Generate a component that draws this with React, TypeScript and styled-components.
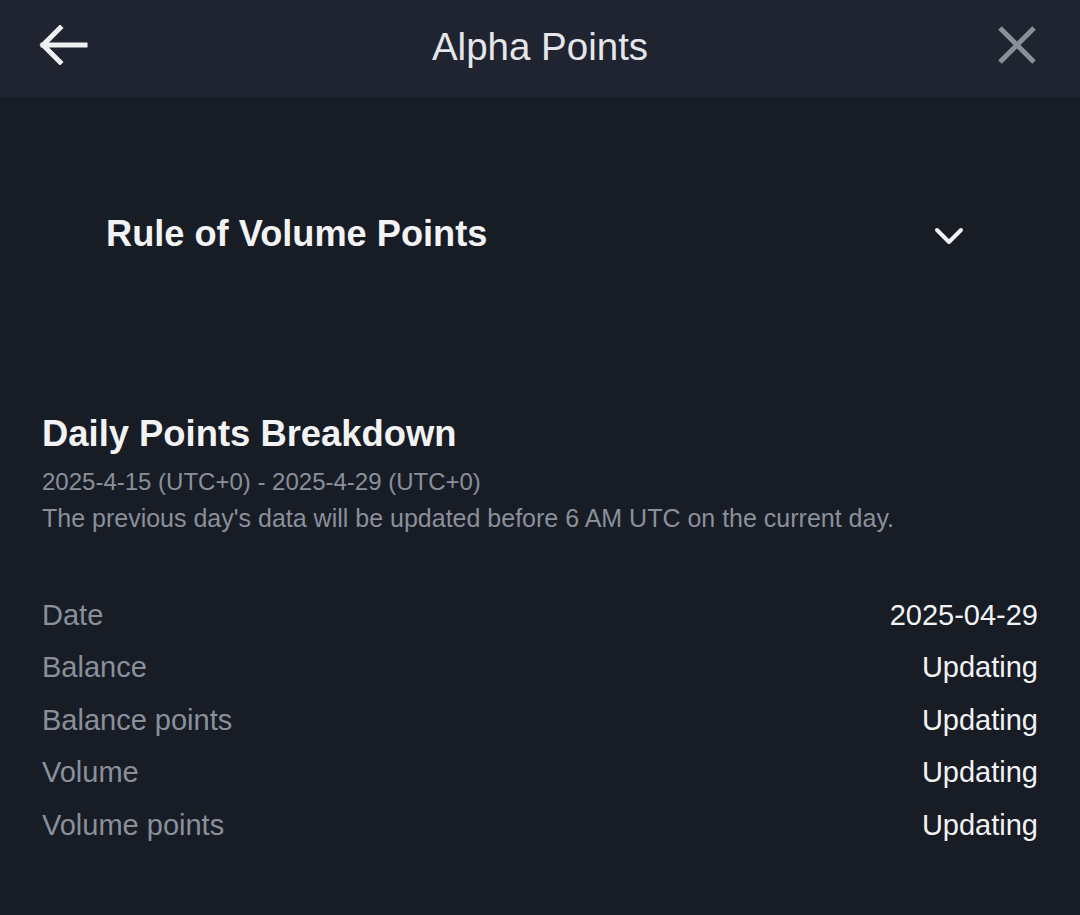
import styled, { createGlobalStyle } from "styled-components";

const GlobalStyle = createGlobalStyle`
  html, body {
    margin: 0;
    padding: 0;
    background: #181c25;
  }
  * {
    box-sizing: border-box;
  }
`;

type RowType = {
  label: string;
  value: string;
};

const rows: RowType[] = [
  { label: "Date", value: "2025-04-29" },
  { label: "Balance", value: "Updating" },
  { label: "Balance points", value: "Updating" },
  { label: "Volume", value: "Updating" },
  { label: "Volume points", value: "Updating" },
];

const BackIcon = () => (
  <svg width="50" height="40" viewBox="0 0 50 40" fill="none">
    <path
      d="M47 20H5M22 3L5 20l17 17"
      stroke="#eef0f2"
      strokeWidth="5"
      strokeLinecap="square"
    />
  </svg>
);

const CloseIcon = () => (
  <svg width="40" height="40" viewBox="0 0 40 40" fill="none">
    <path d="M3 3l34 34M37 3L3 37" stroke="#8a8f99" strokeWidth="5" />
  </svg>
);

const ChevronIcon = () => (
  <svg width="30" height="22" viewBox="0 0 30 22" fill="none">
    <path
      d="M3 5l12 12L27 5"
      stroke="#f2f3f5"
      strokeWidth="4"
      strokeLinecap="round"
      strokeLinejoin="round"
    />
  </svg>
);

const App = () => {
  return (
    <Page>
      <GlobalStyle />
      <Header>
        <IconButton>
          <BackIcon />
        </IconButton>
        <HeaderTitle>Alpha Points</HeaderTitle>
        <IconButton>
          <CloseIcon />
        </IconButton>
      </Header>

      <Content>
        <Accordion>
          <AccordionTitle>Rule of Volume Points</AccordionTitle>
          <ChevronIcon />
        </Accordion>

        <Section>
          <SectionTitle>Daily Points Breakdown</SectionTitle>
          <SubText>2025-4-15 (UTC+0) - 2025-4-29 (UTC+0)</SubText>
          <SubText $wide>
            The previous day's data will be updated before 6 AM UTC on the
            current day.
          </SubText>

          <Table>
            {rows.map((row) => (
              <Row key={row.label}>
                <Label>{row.label}</Label>
                <Value>{row.value}</Value>
              </Row>
            ))}
          </Table>
        </Section>
      </Content>
    </Page>
  );
};

const Page = styled.div`
  width: 1080px;
  min-height: 915px;
  background: #181c25;
  font-family: "Liberation Sans", Arial, sans-serif;
  color: #eaecef;
`;

const Header = styled.header`
  height: 97px;
  background: #1f2430;
  display: flex;
  align-items: center;
  justify-content: space-between;
  padding: 0 38px 0 38px;
`;

const IconButton = styled.div`
  display: flex;
  align-items: center;
  justify-content: center;
  width: 50px;
  height: 40px;
  margin-top: -8px;
`;

const HeaderTitle = styled.h1`
  margin: -4px 0 0;
  font-size: 38.5px;
  font-weight: 400;
  color: #e4e6ea;
`;

const Content = styled.main`
  padding: 0 42px;
`;

const Accordion = styled.div`
  height: 273px;
  display: flex;
  align-items: center;
  justify-content: space-between;
  padding: 0 74px 0 64px;

  svg {
    margin-top: 5px;
  }
`;

const AccordionTitle = styled.h2`
  margin: 0;
  font-size: 36.2px;
  font-weight: 700;
  color: #f2f3f5;
`;

const Section = styled.section`
  padding-top: 42px;
`;

const SectionTitle = styled.h2`
  margin: 0 0 7px;
  font-size: 36.4px;
  font-weight: 700;
  line-height: 44px;
  color: #f2f3f5;
`;

const SubText = styled.p<{ $wide?: boolean }>`
  margin: 0;
  font-size: ${({ $wide }) => ($wide ? "25px" : "24px")};
  line-height: 37px;
  color: #8a909b;
`;

const Table = styled.div`
  margin-top: 52px;
  display: flex;
  flex-direction: column;
`;

const Row = styled.div`
  display: flex;
  justify-content: space-between;
  align-items: center;
  height: 52.5px;
`;

const Label = styled.span`
  font-size: 29px;
  color: #8a909b;
`;

const Value = styled.span`
  font-size: 29px;
  color: #f2f3f5;
`;

export default App;
